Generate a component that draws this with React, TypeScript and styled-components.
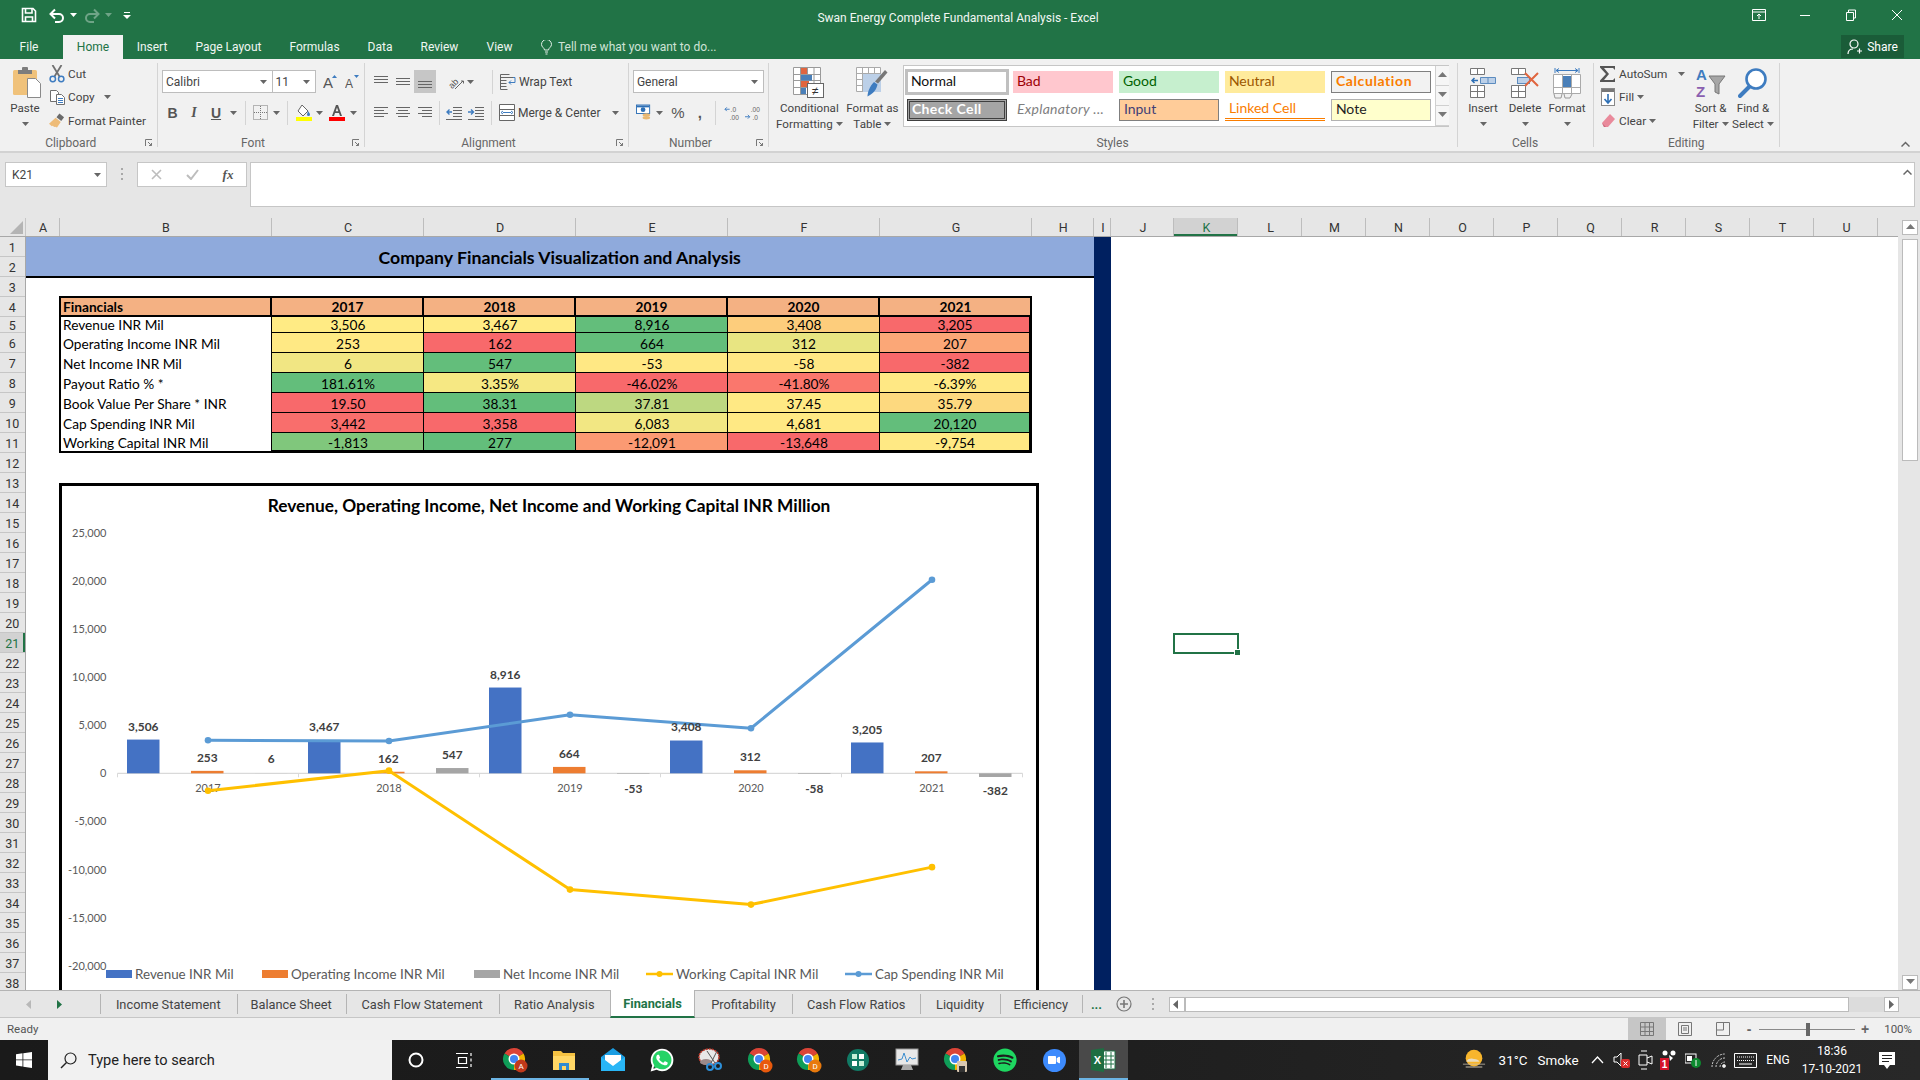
import React from "react";
import styled, { createGlobalStyle } from "styled-components";
import { FaWhatsapp, FaSpotify, FaVideo } from "react-icons/fa";

const UI = `Roboto, "Open Sans", sans-serif`;
const CELL = `Lato, "Open Sans", sans-serif`;

const Global = createGlobalStyle`
  html, body { margin: 0; padding: 0; background: #fff; }
  body { font-family: ${UI}; overflow: hidden; }
  * { box-sizing: border-box; }
  svg { display: block; }
`;

const Page = styled.div`
  width: 1920px; height: 1080px; display: flex; flex-direction: column; overflow: hidden; background: #e6e6e6;
`;

/* ---------- title bar ---------- */
const TitleBar = styled.header`
  height: 59px; flex: none; background: #217346; color: #fff; display: flex; flex-direction: column;
`;
const TitleRow = styled.div`
  height: 35px; display: grid; grid-template-columns: 1fr auto 1fr; align-items: start;
`;
const Qat = styled.div` display: flex; align-items: center; height: 30px; padding-left: 18px; `;
const Slot = styled.span<{ $w: number; $ml?: number; $dim?: boolean }>`
  display: inline-flex; align-items: center; justify-content: center; flex: none;
  width: ${p => p.$w}px; margin-left: ${p => p.$ml ?? 0}px; opacity: ${p => (p.$dim ? 0.35 : 1)};
`;
const DocTitle = styled.div`
  font-size: 12px; line-height: 36px; padding-right: 4px; white-space: nowrap; color: #f2f7f4;
`;
const WinControls = styled.div` display: flex; justify-content: flex-end; height: 30px; align-items: center; `;
const MenuRow = styled.div` height: 24px; display: flex; align-items: stretch; `;
const MenuTab = styled.div<{ $w: number; $ml?: number; $active?: boolean }>`
  width: ${p => p.$w}px; margin-left: ${p => p.$ml ?? 0}px; flex: none; display: flex; align-items: center; justify-content: center;
  font-size: 12px; background: ${p => (p.$active ? "#f1f1f1" : "transparent")};
  color: ${p => (p.$active ? "#217346" : "#f0f6f2")};
`;
const TellMe = styled.div`
  display: flex; align-items: center; gap: 6px; padding-left: 14px; font-size: 12px; color: #cfe3d7;
`;
const Share = styled.div`
  margin-left: auto; margin-right: 16px; width: 63px; height: 23px; background: #1a5c38; display: flex;
  align-items: center; justify-content: center; gap: 4px; font-size: 12px; color: #fff;
`;

/* ---------- ribbon ---------- */
const Ribbon = styled.section`
  height: 94px; flex: none; background: #f1f1f1; border-bottom: 2px solid #d2d2d2; display: flex; color: #444;
  font-size: 12px;
`;
const Group = styled.div<{ $w: number; $pl?: number }>`
  width: ${p => p.$w}px; flex: none; height: 84px; margin-top: 4px; border-right: 1px solid #d4d4d4;
  padding-left: ${p => p.$pl ?? 0}px; display: flex; flex-direction: column;
`;
const GroupBody = styled.div` height: 72px; flex: none; display: flex; `;
const GroupLabel = styled.div<{ $launch?: boolean }>`
  height: 16px; line-height: 16px; text-align: center; font-size: 12px; color: #666; flex: none; position: relative;
  padding-right: ${p => (p.$launch ? 15 : 0)}px;
`;
const GroupFoot = styled.div<{ $ml: number }>`
  margin-left: ${p => -p.$ml}px;
`;
const Launcher = styled.span`
  position: absolute; right: 5px; top: 4px;
`;
const BigCol = styled.div<{ $w: number; $ml?: number }>`
  width: ${p => p.$w}px; margin-left: ${p => p.$ml ?? 0}px; flex: none; padding-top: 4px; display: flex;
  flex-direction: column; align-items: center;
`;
const BigIcon = styled.div` height: 33px; display: flex; align-items: flex-start; justify-content: center; `;
const BigLine = styled.div`
  height: 16px; line-height: 16px; white-space: nowrap; display: flex; align-items: center; gap: 3px; font-size: 11.6px;
`;
const Stack = styled.div<{ $w: number; $ml?: number }>`
  width: ${p => p.$w}px; margin-left: ${p => p.$ml ?? 0}px; margin-top: -1px; flex: none; display: flex; flex-direction: column;
  font-size: 11.8px;
`;
const StackRow = styled.div` height: 23.5px; display: flex; align-items: center; gap: 3px; white-space: nowrap; `;
const IconBox = styled.span` width: 16px; flex: none; display: inline-flex; justify-content: center; `;
const Rows = styled.div` padding-top: 7px; display: flex; flex-direction: column; gap: 8px; `;
const Row = styled.div` height: 23px; display: flex; align-items: center; `;
const Select = styled.div<{ $w: number; $joined?: boolean }>`
  width: ${p => p.$w}px; height: 23px; flex: none; background: #fff; border: 1px solid #bdbdbd;
  border-left-width: ${p => (p.$joined ? 0 : 1)}px;
  display: flex; align-items: center; justify-content: space-between; padding: 0 5px 0 3px; font-size: 12px; color: #444;
`;
const Sep = styled.span<{ $ml: number }>`
  width: 1px; height: 24px; background: #d4d4d4; margin-left: ${p => p.$ml}px; flex: none;
`;
const Glyph = styled.span<{ $b?: boolean; $i?: boolean; $u?: boolean; $size?: number }>`
  font-size: ${p => p.$size ?? 14}px; color: #555; line-height: 1;
  font-family: ${p => (p.$i ? `"Liberation Serif", serif` : `"Liberation Sans", sans-serif`)};
  font-weight: ${p => (p.$b ? 700 : 400)}; font-style: ${p => (p.$i ? "italic" : "normal")};
  text-decoration: ${p => (p.$u ? "underline" : "none")};
`;
const ActiveSlot = styled(Slot)` height: 23px; background: #c6c6c6; `;
const TextAfterIcon = styled.span<{ $ml?: number }>` margin-left: ${p => p.$ml ?? 3}px; white-space: nowrap; font-size: 12px; `;
const Gallery = styled.div`
  width: 546px; height: 62px; margin-left: -1px; margin-top: 2px; background: #fff; border: 1px solid #c6c6c6; display: flex; flex: none;
`;
const GalleryGrid = styled.div`
  display: grid; grid-template-columns: repeat(5, 100px); grid-auto-rows: 22px; gap: 6px; padding: 5px 0 0 3px; width: 531.5px;
`;
const STYLE: Record<string, string> = {
  normal: "background:#fff; color:#111; outline:3px solid #c0c0c0; outline-offset:-1px;",
  bad: "background:#ffc7ce; color:#9c0006;",
  good: "background:#c6efce; color:#006100;",
  neutral: "background:#ffeb9c; color:#9c5700;",
  calc: "background:#f2f2f2; color:#fa7d00; font-weight:700; letter-spacing:.6px; border:1px solid #7f7f7f;",
  check: "background:#a5a5a5; color:#fff; font-weight:700; letter-spacing:.4px; border:1px solid #3f3f3f; outline:1px solid #3f3f3f; outline-offset:-3px;",
  expl: "background:#fff; color:#7f7f7f; font-style:italic; letter-spacing:.3px;",
  input: "background:#ffcc99; color:#3f3f76; border:1px solid #7f7f7f;",
  linked: "background:#fff; color:#fa7d00; border-bottom:3px double #fa7d00;",
  note: "background:#ffffcc; color:#222; border:1px solid #b2b2b2;",
};
const StyleCell = styled.div<{ $v: string }>`
  font-family: ${CELL}; font-size: 14px; display: flex; align-items: center; padding: 0 0 3px 4px; white-space: nowrap; overflow: hidden;
  ${p => STYLE[p.$v]}
`;
const Spinner = styled.div` width: 14px; margin-left: 4px; display: flex; flex-direction: column; border-left: 1px solid #d0d0d0; flex: none; `;
const SpinBtn = styled.div`
  height: 20px; display: flex; align-items: center; justify-content: center; border-bottom: 1px solid #d0d0d0; background: #f6f6f6;
`;
const RibbonEnd = styled.div` flex: 1; display: flex; align-items: flex-end; justify-content: flex-end; padding: 0 10px 4px 0; `;

/* ---------- formula bar ---------- */
const FormulaBar = styled.div` height: 65px; flex: none; padding: 9px 5px 0 5px; display: flex; align-items: flex-start; background: #e6e6e6; `;
const NameBox = styled.div`
  width: 102px; height: 25px; background: #fff; border: 1px solid #c6c6c6; display: flex; align-items: center;
  justify-content: space-between; padding: 0 5px 0 6px; font-size: 12px; color: #444; flex: none;
`;
const Dots = styled.div` width: 30px; flex: none; height: 25px; display: flex; align-items: center; justify-content: center; `;
const FxBox = styled.div`
  width: 110px; height: 25px; background: #fff; border: 1px solid #c6c6c6; display: flex; align-items: center; padding: 0; flex: none;
`;
const FxText = styled.span`
  font-family: "Liberation Serif", serif; font-style: italic; font-weight: 700; font-size: 13px; color: #555;
`;
const FormulaInput = styled.div`
  flex: 1; height: 45px; margin-left: 3px; background: #fff; border: 1px solid #c6c6c6; display: flex; justify-content: flex-end; padding: 6px 2px 0 0;
`;

/* ---------- grid ---------- */
const Workbook = styled.div` height: 772px; flex: none; display: flex; `;
const GridArea = styled.div` width: 1898px; flex: none; display: flex; flex-direction: column; `;
const ColHeaders = styled.div` height: 19px; flex: none; display: flex; border-bottom: 1px solid #a8a8a8; background: #e6e6e6; `;
const Corner = styled.div` width: 25.5px; flex: none; display: flex; align-items: flex-end; justify-content: flex-end; padding: 0 2px 2px 0; border-right: 1px solid #c6c6c6; `;
const ColHead = styled.div<{ $w: number; $active?: boolean }>`
  width: ${p => p.$w}px; flex: none; display: flex; align-items: center; justify-content: center; font-size: 12.5px; padding-left: 2px;
  border-right: 1px solid #bdbdbd; color: ${p => (p.$active ? "#217346" : "#333")};
  background: ${p => (p.$active ? "#d2d2d2" : "transparent")};
  box-shadow: ${p => (p.$active ? "inset 0 -2px 0 #217346" : "none")};
`;
const GridBody = styled.div` flex: 1; display: flex; min-height: 0; overflow: hidden; `;
const RowHeaders = styled.div` width: 25.5px; flex: none; display: flex; flex-direction: column; border-right: 1px solid #a8a8a8; `;
const RowHead = styled.div<{ $h: number; $active?: boolean }>`
  height: ${p => p.$h}px; flex: none; display: flex; align-items: center; justify-content: center; font-size: 12.5px; padding-top: 2px;
  border-bottom: 1px solid #c6c6c6; color: ${p => (p.$active ? "#217346" : "#333")};
  background: ${p => (p.$active ? "#d2d2d2" : "transparent")};
  box-shadow: ${p => (p.$active ? "inset -2px 0 0 #217346" : "none")};
`;
const Sheet = styled.div` flex: 1; position: relative; background: #fff; display: flex; overflow: hidden; `;
const Dashboard = styled.div` width: 1068.5px; flex: none; display: flex; flex-direction: column; `;
const Divider = styled.div` width: 17px; flex: none; background: #002060; `;
const Banner = styled.div`
  height: 41px; flex: none; background: #8faadc; border-bottom: 2px solid #000; display: flex; align-items: center;
  justify-content: center; font: 700 17.7px ${CELL}; color: #000; padding-top: 2px;
`;
const FinTable = styled.div`
  margin: 18px 0 0 33.5px; width: 973px; flex: none; border: 2px solid #000; display: grid;
  grid-template-columns: 211px 152px 152px 152px 152px 150px;
  grid-template-rows: 19px 16.3px repeat(5, 20px) 18.2px;
  font: 13.7px ${CELL}; color: #000;
`;
const HeadCell = styled.div<{ $left?: boolean }>`
  background: #f4b183; border-bottom: 2px solid #000; border-right: 2px solid #000; display: flex; align-items: center;
  justify-content: ${p => (p.$left ? "flex-start" : "center")}; padding-left: ${p => (p.$left ? 2 : 1)}px; font-weight: 700;
  &:nth-child(6) { border-right: 0; }
`;
const RowLabel = styled.div<{ $tight?: boolean }>`
  background: #fff; border-right: 1px solid #000; display: flex; align-items: center; white-space: nowrap;
  padding: ${p => (p.$tight ? "0 0 2px 2px" : "1px 0 0 2px")};
`;
const ValueCell = styled.div<{ $bg: string; $tight?: boolean }>`
  background: ${p => p.$bg}; display: flex; align-items: center; justify-content: center;
  padding: ${p => (p.$tight ? "0 0 1px 1px" : "1px 0 0 1px")};
  border-right: 1px solid #000; border-bottom: 1px solid #000;
`;
const ChartBox = styled.div`
  margin: 30px 0 0 33.5px; width: 980px; height: 520px; flex: none; border: 3px solid #000; background: #fff; display: flex; flex-direction: column;
`;
const ChartTitle = styled.div`
  height: 38.6px; flex: none; display: flex; align-items: center; justify-content: center; font: 700 17.3px ${CELL}; color: #000;
`;
const Plot = styled.svg` flex: none; overflow: visible; `;
const AxisText = styled.text` font: 11px ${CELL}; fill: #595959; `;
const DataText = styled.text` font: 700 11.9px ${CELL}; fill: #404040; `;
const Legend = styled.div` height: 24px; flex: none; display: flex; align-items: center; padding-left: 44px; `;
const LegendItem = styled.div<{ $w: number }>`
  width: ${p => p.$w}px; flex: none; display: flex; align-items: center; gap: 3px; font: 13.4px ${CELL}; color: #595959; white-space: nowrap;
`;
const Swatch = styled.span<{ $c: string }>` width: 26px; height: 8px; background: ${p => p.$c}; flex: none; `;
const Selection = styled.div`
  position: absolute; left: 1147.5px; top: 396px; width: 66px; height: 21px; border: 2px solid #217346;
  &::after { content: ""; position: absolute; right: -4px; bottom: -4px; width: 5px; height: 5px; background: #217346; border: 1px solid #fff; }
`;
const VScroll = styled.div` flex: 1; display: flex; flex-direction: column; padding: 2px 2px 0 4px; background: #e6e6e6; `;
const ScrollBtn = styled.div<{ $w?: number; $ml?: number }>`
  height: 15px; width: ${p => (p.$w ? p.$w + "px" : "auto")}; margin-left: ${p => p.$ml ?? 0}px; flex: none; background: #fff; border: 1px solid #bbb; display: flex; align-items: center; justify-content: center;
`;
const VThumb = styled.div` height: 222px; margin-top: 4px; background: #fff; border: 1px solid #bbb; flex: none; `;
const Grow = styled.div` flex: 1; `;

/* ---------- sheet tabs ---------- */
const TabBar = styled.div`
  height: 28px; flex: none; display: flex; align-items: stretch; background: #e6e6e6; border-top: 1px solid #b4b4b4; border-bottom: 1px solid #c6c6c6; font-size: 12.8px; color: #444;
`;
const TabNav = styled.div` width: 100px; flex: none; display: flex; align-items: center; padding-left: 25px; gap: 21px; `;
const SheetTab = styled.div<{ $w: number; $active?: boolean; $noSep?: boolean }>`
  width: ${p => p.$w}px; flex: none; display: flex; align-items: center; margin-bottom: ${p => (p.$active ? -1 : 0)}px;
  margin-top: ${p => (p.$active ? -1 : 0)}px; white-space: nowrap;
  justify-content: ${p => (p.$active || p.$noSep ? "center" : "space-between")};
  ${p => p.$active
    ? `background:#fff; color:#217346; font-weight:700; border-left:1px solid #b4b4b4; border-right:1px solid #b4b4b4; border-bottom:2px solid #217346;`
    : ""}
  &::before {
    content: ""; display: ${p => (p.$active || p.$noSep ? "none" : "block")}; width: 1px; height: 20px; background: #b4b4b4;
  }
  &::after { content: ""; display: ${p => (p.$active || p.$noSep ? "none" : "block")}; width: 1px; }
`;
const More = styled.div` width: 28px; flex: none; border-left: 1px solid #b4b4b4; margin: 4px 0; display: flex; align-items: center; justify-content: center; color: #217346; font-weight: 700; `;
const HScroll = styled.div` flex: 1; display: flex; align-items: center; padding: 0 21px 0 0; `;
const HThumb = styled.div` width: 664px; height: 15px; flex: none; background: #fff; border: 1px solid #bbb; `;
const HRest = styled.div` flex: 1; height: 15px; background: #dcdcdc; `;

/* ---------- status ---------- */
const StatusBar = styled.div`
  height: 22px; flex: none; background: #f0f0f0; display: flex; align-items: stretch; font-size: 11.5px; color: #555;
`;
const Ready = styled.div` display: flex; align-items: center; padding-left: 7px; `;
const ViewBtns = styled.div` margin-left: auto; display: flex; align-items: center; padding-right: 8px; `;
const ViewBtn = styled.div<{ $active?: boolean; $w: number }>`
  width: ${p => p.$w}px; height: 22px; display: flex; align-items: center; justify-content: center; background: ${p => (p.$active ? "#c6c6c6" : "transparent")};
`;
const ZoomTrack = styled.div`
  width: 96px; height: 1px; background: #8a8a8a; position: relative; margin: 0 3px; flex: none;
`;
const ZoomThumb = styled.span` position: absolute; left: 47px; top: -6px; width: 4px; height: 13px; background: #666; `;
const ZoomText = styled.div` width: 40px; text-align: right; `;
const Sign = styled.span` font: 700 14px "Liberation Sans", sans-serif; color: #666; width: 14px; text-align: center; `;

/* ---------- taskbar ---------- */
const Taskbar = styled.footer`
  height: 40px; flex: none; background: linear-gradient(90deg, #1a1a1a, #1d1d1d 50%, #282828); display: flex; align-items: stretch; color: #fff;
`;
const Start = styled.div` width: 48px; flex: none; display: flex; align-items: center; justify-content: center; `;
const Search = styled.div`
  width: 344px; flex: none; background: #f1f1f1; display: flex; align-items: center; gap: 11px; padding-left: 12px; font-size: 14.6px; color: #222;
`;
const Pinned = styled.div<{ $w: number; $ml?: number; $on?: boolean; $under?: boolean }>`
  width: ${p => p.$w}px; margin-left: ${p => p.$ml ?? 0}px; flex: none; display: flex; align-items: center; justify-content: center;
  background: ${p => (p.$on ? "#494949" : "transparent")};
  box-shadow: ${p => (p.$on || p.$under ? "inset 0 -2px 0 #6cb4e4" : "none")};
`;
const ZoomTile = styled.span`
  width: 23px; height: 23px; border-radius: 50%; background: #3d8bfd; display: flex; align-items: center; justify-content: center;
`;
const WaTile = styled.span`
  width: 21px; height: 21px; border-radius: 50%; background: #25d366; display: flex; align-items: center; justify-content: center;
  svg { flex: none; }
`;
const Tray = styled.div` margin-left: auto; margin-right: 12px; display: flex; align-items: center; `;
const TrayItem = styled.div<{ $w: number; $ml?: number; $fs?: number }>`
  width: ${p => p.$w}px; margin-left: ${p => p.$ml ?? 0}px; flex: none; display: flex; align-items: center; justify-content: center; white-space: nowrap;
  font-size: ${p => p.$fs ?? 13.4}px;
`;
const Clock = styled(TrayItem)` flex-direction: column; font-size: 12px; line-height: 18px; `;

/* ---------- icon drawings ---------- */
const Caret = ({ c = "#666" }: { c?: string }) => (
  <svg width="7" height="4" viewBox="0 0 7 4"><path d="M0 0h7L3.5 4z" fill={c} /></svg>
);
const Save = () => (
  <svg width="16" height="16" viewBox="0 0 16 16" fill="none" stroke="#fff" strokeWidth="1.6">
    <path d="M1.5 1.5h10.5l2.5 2.5v10.5h-13z" /><path d="M4.5 2v4h6.5V2M4.5 14.5V10h7v4.5" />
  </svg>
);
const Undo = ({ c = "#fff" }: { c?: string }) => (
  <svg width="16" height="15" viewBox="0 0 16 15" fill="none" stroke={c} strokeWidth="2">
    <path d="M2 6h8a4 4 0 010 8H6" /><path d="M6 1.5L1.5 6 6 10.5" />
  </svg>
);
const Redo = () => (
  <svg width="16" height="15" viewBox="0 0 16 15" fill="none" stroke="#fff" strokeWidth="2">
    <path d="M14 6H6a4 4 0 000 8h4" /><path d="M10 1.5L14.5 6 10 10.5" />
  </svg>
);
const QatMenu = () => (
  <svg width="8" height="8" viewBox="0 0 8 8"><path d="M1 1h6v1H1zM0 4h8L4 8z" fill="#fff" /></svg>
);
const Paste = () => (
  <svg width="32" height="31" viewBox="-4 0 32 31">
    <rect x="0" y="3" width="24" height="25" rx="1.500" fill="#f0c27b" />
    <rect x="5" y="3" width="14" height="4" fill="#7d7d7d" /><rect x="9" y="0" width="6" height="4" rx="1" fill="#7d7d7d" />
    <path d="M14.500 11.500h8l5 5v14h-13z" fill="#fff" stroke="#8a8a8a" />
  </svg>
);
const Cut = () => (
  <svg width="16" height="18" viewBox="0 0 16 18" fill="none">
    <path d="M3.500 0l7 11.500M12.500 0l-7 11.500" stroke="#707070" strokeWidth="1.800" />
    <circle cx="3.800" cy="14" r="2.700" stroke="#3e7cc0" strokeWidth="1.500" /><circle cx="12.200" cy="14" r="2.700" stroke="#3e7cc0" strokeWidth="1.500" />
  </svg>
);
const Copy = () => (
  <svg width="15" height="15" viewBox="0 0 15 15" fill="#fff" stroke="#707070">
    <path d="M.5.5h6l2 2v9h-8z" /><path d="M6.500 4.500h5l3 3v7h-8z" />
    <path d="M8 8.500h5M8 10.500h5M8 12.500h5" stroke="#3e7cc0" />
  </svg>
);
const Painter = () => (
  <svg width="17" height="16" viewBox="0 0 17 16">
    <path d="M11 0l5 4-3 4-5-4z" fill="#6a6a6a" /><path d="M7 4.500l5.500 4.500-4 6-2-1-1 .5-1.500-1.500-1 .5L0 11z" fill="#eebc79" />
  </svg>
);
const FillColor = () => (
  <svg width="16" height="17" viewBox="0 0 16 17">
    <path d="M6 1l6 6-5 5-5-5z" fill="#fff" stroke="#666" /><path d="M12 7c1 1.500 2 2.500 2 3.500a1.500 1.500 0 01-3 0z" fill="#3e7cc0" />
    <rect y="13" width="16" height="4" fill="#ffff00" />
  </svg>
);
const FontColor = () => (
  <svg width="16" height="17" viewBox="0 0 16 17">
    <path d="M3 12L7 1h2l4 11h-2l-1-3H6l-1 3zM6.700 7.300h2.600L8 3.500z" fill="#555" />
    <rect y="13" width="16" height="4" fill="#ff0000" />
  </svg>
);
const Borders = () => (
  <svg width="15" height="15" viewBox="0 0 15 15" stroke="#777" strokeDasharray="1 1" fill="none">
    <path d="M.5.5h14v14H.5zM7.500 1v13M1 7.500h13" />
  </svg>
);
const GrowA = ({ small }: { small?: boolean }) => (
  <svg width="14" height="15" viewBox="0 0 14 15">
    <text x="0" y="14" fontFamily="Liberation Sans" fontSize={small ? 12 : 15} fill="#555">A</text>
    <path d={small ? "M9 1h5l-2.500 3z" : "M9 4h5l-2.500-3z"} fill="#3e7cc0" />
  </svg>
);
const Lines = ({ rows }: { rows: number[][] }) => (
  <svg width="14" height="14" viewBox="0 0 14 14" stroke="#666">
    {rows.map((r, i) => <path key={i} d={`M${r[0]} ${r[1]}.500h${r[2]}`} />)}
  </svg>
);
const Orient = () => (
  <svg width="18" height="16" viewBox="0 0 18 16" fill="none">
    <text x="1" y="12" fontSize="9" fontFamily="Liberation Sans" fill="#555" stroke="none" transform="rotate(-45 7 9)">ab</text>
    <path d="M8 15l8-8M14 7h2.500v2.500" stroke="#666" />
  </svg>
);
const Indent = ({ rev }: { rev?: boolean }) => (
  <svg width="16" height="14" viewBox="0 0 16 14" stroke="#666" fill="none">
    <path d="M7 1.500h9M7 4.500h9M7 7.500h9M7 10.500h9M0 13.500h16" />
    <path d={rev ? "M6 6H1M3.500 3.500L1 6l2.500 2.500" : "M0 6h5M3 3.500L5.500 6 3 8.500"} stroke="#3e7cc0" strokeWidth="1.4" />
  </svg>
);
const Wrap = () => (
  <svg width="16" height="16" viewBox="0 0 16 16" fill="none" stroke="#666">
    <path d="M.5.5h9M.5 3.500h13M.5 6.500h6M.5 9.500h6M.5 12.500h6M.5.5v15h7" />
    <path d="M13 3.500h2v5h-6M11 6.500L9 8.500l2 2" stroke="#3e7cc0" />
  </svg>
);
const Merge = () => (
  <svg width="16" height="17" viewBox="0 0 16 17" fill="#fff" stroke="#666">
    <path d="M.5.5h15v16H.5zM.5 5.500h15M.5 11.500h15" /><path d="M4 8.500h8M4 7l-2 1.500L4 10M12 7l2 1.500L12 10" stroke="#3e7cc0" />
  </svg>
);
const Accounting = () => (
  <svg width="17" height="18" viewBox="0 0 17 18">
    <rect x=".5" y=".5" width="14" height="9" fill="#fff" stroke="#2d6fb5" /><rect x="1" y="1" width="13" height="2" fill="#2d6fb5" />
    <circle cx="7.500" cy="5.500" r="2.500" fill="#2d6fb5" /><ellipse cx="11" cy="11" rx="4" ry="1.800" fill="#e9b872" /><ellipse cx="11" cy="14" rx="4" ry="1.800" fill="#e9b872" />
  </svg>
);
const Decimal = ({ more }: { more?: boolean }) => (
  <svg width="17" height="16" viewBox="0 0 17 16">
    <text x={more ? 6 : 7} y="7" fontSize="7" fontFamily="Liberation Sans" fill="#666">{more ? ".00" : ".0"}</text>
    <text x={more ? 8 : 6} y="15" fontSize="7" fontFamily="Liberation Sans" fill="#666">{more ? ".0" : ".00"}</text>
    <path d={more ? "M0 12h5M3 10l2 2-2 2" : "M1 4h5M3 2L1 4l2 2"} stroke="#3e7cc0" fill="none" />
  </svg>
);
const CondFmt = () => (
  <svg width="32" height="31" viewBox="0 0 32 31">
    <g fill="#fff" stroke="#9a9a9a"><path d="M.5.5h27v27H.5zM7.500 1v26M14.500 1v26M21 1v26M1 7.500h26M1 13.500h26M1 20.500h26" /></g>
    <rect x="8" y="1" width="6" height="6" fill="#e0653f" /><rect x="8" y="8" width="11" height="5.500" fill="#4a7fb8" /><rect x="8" y="14" width="8" height="6" fill="#e0653f" /><rect x="8" y="21" width="5" height="6" fill="#4a7fb8" />
    <rect x="14.500" y="16.500" width="16" height="14" fill="#fff" stroke="#666" />
    <text x="19" y="28" fontSize="12" fontFamily="Liberation Sans" fill="#333">≠</text>
  </svg>
);
const FmtTable = () => (
  <svg width="32" height="31" viewBox="0 0 32 31">
    <g fill="#fff" stroke="#aaa"><path d="M.5.5h24v24H.5zM6.500 1v24M12.500 1v24M18.500 1v24M1 6.500h24M1 12.500h24M1 18.500h24" /></g>
    <rect x="7" y="7" width="18" height="18" fill="#bcd0e8" />
    <path d="M29 3l2.500 2.500-9.500 11-3-2z" fill="#777" /><path d="M18 15l3.500 2.500c-1 5-4 9-10 12 0-4 2-10 6.500-14.500z" fill="#3e7cc0" />
  </svg>
);
const CellGrid = ({ x, y, n = 2 }: { x: number; y: number; n?: number }) => (
  <path d={`M${x}.500 ${y}.500h14v${n === 2 ? 12 : 6}h-14zM${x + 7}.500 ${y}v${n === 2 ? 12 : 6}${n === 2 ? `M${x} ${y + 6}.500h14` : ""}`} fill="#fff" stroke="#777" />
);
const InsertCells = () => (
  <svg width="28" height="31" viewBox="0 0 28 31">
    <CellGrid x={1} y={1} n={1} /><CellGrid x={1} y={18} />
    <path d="M11.500 10.500h15v6h-15zM19 11v5" fill="#bcd0e8" stroke="#5c8cbf" />
    <path d="M9 13.500H3M5.500 11L3 13.500 5.500 16" stroke="#2d6fb5" strokeWidth="1.500" fill="none" />
  </svg>
);
const DeleteCells = () => (
  <svg width="30" height="31" viewBox="0 0 30 31">
    <CellGrid x={1} y={1} n={1} /><CellGrid x={1} y={18} />
    <rect x="7.500" y="10.500" width="12" height="6" fill="#bcd0e8" stroke="#5c8cbf" />
    <path d="M15 6l13 13M28 6L15 19" stroke="#e0653f" strokeWidth="2" />
  </svg>
);
const FormatCells = () => (
  <svg width="28" height="33" viewBox="0 0 28 33">
    <path d="M2 1v5M26 1v5M3 3.500h22M3 3.500l3-2M3 3.500l3 2M25 3.500l-3-2M25 3.500l-3 2" stroke="#3e7cc0" fill="none" />
    <g fill="#fff" stroke="#aaa"><path d="M.5 7.500h27v19H.5zM9.500 8v18M18.500 8v18M1 20.500h26" /></g>
    <rect x="10" y="9" width="8" height="11" fill="#4a7fb8" />
    <path d="M1 27l1 4h6l1-4M11 27l1 4h5l2-4" fill="none" stroke="#999" />
  </svg>
);
const Sigma = () => (
  <svg width="16" height="16" viewBox="0 0 16 16"><path d="M0 0h15v4l-2-2H4l5 6-5 6h9l2-2v4H0v-1.500L6 8 0 1.500z" fill="#555" /></svg>
);
const FillDown = () => (
  <svg width="14" height="18" viewBox="0 0 14 18">
    <rect x=".5" y=".5" width="13" height="17" fill="#fff" stroke="#888" /><rect x="1" y="1" width="12" height="3" fill="#777" />
    <path d="M7 6v9M3.500 11L7 15l3.500-4" stroke="#2d6fb5" strokeWidth="1.600" fill="none" />
  </svg>
);
const Eraser = () => (
  <svg width="15" height="15" viewBox="0 0 15 15"><path d="M9 1l5 5-7 8H3L1 10z" fill="#e98a9b" /><path d="M1 10l4 4H3z" fill="#c9697c" /></svg>
);
const SortFilter = () => (
  <svg width="30" height="34" viewBox="0 0 30 34">
    <text x="0" y="13" fontSize="15" fontWeight="700" fontFamily="Liberation Sans" fill="#3e7cc0">A</text>
    <text x="0" y="30" fontSize="15" fontWeight="700" fontFamily="Liberation Sans" fill="#8a5fb0">Z</text>
    <path d="M13 9h16l-6 8v10l-4-2v-8z" fill="#a6a6a6" stroke="#777" />
  </svg>
);
const Find = () => (
  <svg width="30" height="33" viewBox="0 0 30 33" fill="none">
    <circle cx="18" cy="12" r="9.500" stroke="#3e7cc0" strokeWidth="2.600" fill="#fff" /><path d="M11 20L2 29" stroke="#3e7cc0" strokeWidth="4" strokeLinecap="round" />
  </svg>
);
const LaunchIcon = () => (
  <svg width="7" height="7" viewBox="0 0 7 7" fill="none" stroke="#777"><path d="M.5 7V.5H7" /><path d="M3 3l3.500 3.500M4 6.500h2.500V4" /></svg>
);
const Chevron = ({ up = true }: { up?: boolean }) => (
  <svg width="9" height="6" viewBox="0 0 9 6" fill="none" stroke="#666" strokeWidth="1.500"><path d={up ? "M.5 5.500l4-4 4 4" : "M.5.5l4 4 4-4"} /></svg>
);
const Tri = ({ dir, c = "#777" }: { dir: "u" | "d" | "l" | "r"; c?: string }) => {
  const d = { u: "M0 6h9L4.500 1z", d: "M0 1h9L4.500 6z", l: "M6 0v9L1 4.500z", r: "M2 0v9l5-4.500z" }[dir];
  return <svg width="9" height="9" viewBox="0 0 9 9"><path d={d} fill={c} /></svg>;
};
const Bulb = () => (
  <svg width="11" height="15" viewBox="0 0 11 15" fill="none" stroke="#e4efe8"><path d="M3.500 10c0-2-3-3-3-5.500a5 5 0 0110 0c0 2.500-3 3.500-3 5.500zM4 12h3M4.500 14h2" /></svg>
);
const Person = () => (
  <svg width="16" height="16" viewBox="0 0 16 16" fill="none" stroke="#fff" strokeWidth="1.200"><circle cx="7" cy="5" r="4" /><path d="M1 15c0-3 2-5 5-5M10 12h5M12.500 9.500v5" /></svg>
);
const WinBtn = ({ d }: { d: string }) => (
  <svg width="12" height="12" viewBox="0 0 12 12" fill="none" stroke="#fff"><path d={d} /></svg>
);
const RibbonDisp = () => (
  <svg width="14" height="12" viewBox="0 0 14 12" fill="none" stroke="#fff"><path d="M.5.5h13v11H.5zM.5 3h13M7 10V5M5 7l2-2 2 2" /></svg>
);
const Check = () => (
  <svg width="13" height="11" viewBox="0 0 13 11" fill="none" stroke="#bdbdbd" strokeWidth="2"><path d="M1 6l4 4 7-9" /></svg>
);
const XMark = () => (
  <svg width="11" height="11" viewBox="0 0 11 11" stroke="#bdbdbd" strokeWidth="1.600"><path d="M1 1l9 9M10 1l-9 9" /></svg>
);
const VDots = () => (
  <svg width="3" height="13" viewBox="0 0 3 13" fill="#a8a8a8"><rect width="2" height="2" /><rect y="5" width="2" height="2" /><rect y="10" width="2" height="2" /></svg>
);
const CornerTri = () => (
  <svg width="13" height="13" viewBox="0 0 13 13"><path d="M13 0v13H0z" fill="#b4b4b4" /></svg>
);
const PlusCircle = () => (
  <svg width="16" height="16" viewBox="0 0 16 16" fill="none" stroke="#777" strokeWidth="1.200"><circle cx="8" cy="8" r="7" /><path d="M8 4v8M4 8h8" strokeWidth="1.600" /></svg>
);
const ViewNormal = () => (
  <svg width="14" height="14" viewBox="0 0 14 14" fill="none" stroke="#777"><path d="M.5.500h13v13H.5zM5 1v12M9.500 1v12M1 5h12M1 9.500h12" /></svg>
);
const ViewPage = () => (
  <svg width="14" height="14" viewBox="0 0 14 14" fill="none" stroke="#777"><path d="M.5.500h13v13H.5zM3.500 3.500h7v8h-7zM5 6h4M5 8h4" /></svg>
);
const ViewBreak = () => (
  <svg width="14" height="14" viewBox="0 0 14 14" fill="none" stroke="#777"><path d="M.5.500h13v13H.5zM7.500 1v7H1" /></svg>
);

/* taskbar drawings */
const Windows = () => (
  <svg width="16" height="16" viewBox="0 0 16 16" fill="#fff"><path d="M0 2.300l6.500-1v6.200H0zM7.300 1.200L16 0v7.500H7.300zM0 8.300h6.500v6.200l-6.500-1zM7.300 8.300H16V16l-8.700-1.200z" /></svg>
);
const Magnifier = () => (
  <svg width="17" height="17" viewBox="0 0 17 17" fill="none" stroke="#222" strokeWidth="1.200"><circle cx="10.500" cy="6.500" r="5.500" /><path d="M6.500 10.500L1 16" strokeWidth="1.500" /></svg>
);
const Cortana = () => (
  <svg width="16" height="16" viewBox="0 0 16 16" fill="none" stroke="#fff" strokeWidth="2"><circle cx="8" cy="8" r="6.500" /></svg>
);
const TaskView = () => (
  <svg width="17" height="17" viewBox="0 0 17 17" fill="none" stroke="#fff"><path d="M0 1.500h12M0 15.500h12M2.500 5.500h8v6h-8zM15 1v3M15 6.500v3M15 12v3" strokeWidth="1.200" /></svg>
);
const Chrome = ({ badge, bc, face }: { badge?: string; bc?: string; face?: boolean }) => (
  <svg width="26" height="26" viewBox="0 0 26 26">
    <path d="M12 12L2.470 6.500A11 11 0 0121.530 6.500z" fill="#db4437" />
    <path d="M12 12L21.530 6.500A11 11 0 0112 23z" fill="#f4b400" />
    <path d="M12 12L12 23A11 11 0 012.470 6.500z" fill="#0f9d58" />
    <circle cx="12" cy="12" r="5.500" fill="#fff" /><circle cx="12" cy="12" r="4" fill="#4285f4" />
    {badge && <circle cx="19" cy="19" r="6.500" fill={bc} />}
    {badge && <text x="19" y="22" textAnchor="middle" fontSize="8" fontFamily="Roboto" fill="#fff">{badge}</text>}
    {face && <g><rect x="14" y="14" width="10" height="11" rx="1" fill="#d9c7b0" /><rect x="16" y="19" width="6" height="6" fill="#333" /></g>}
  </svg>
);
const Folder = () => (
  <svg width="24" height="22" viewBox="0 0 24 22">
    <path d="M1 2h8l2 2h12v17H1z" fill="#f5c242" /><path d="M1 7h22v14H1z" fill="#ffd765" />
    <rect x="7" y="14" width="10" height="7" fill="#2f8bd0" /><rect x="10" y="17" width="4" height="4" fill="#ffd765" />
  </svg>
);
const Mail = () => (
  <svg width="26" height="26" viewBox="0 0 26 26">
    <path d="M13 1l12 9v14H1V10z" fill="#1b9de2" /><path d="M5 8h16v9l-8 5-8-5z" fill="#fff" /><path d="M1 10l12 9 12-9v14H1z" fill="#29b6f6" />
  </svg>
);
const Snip = () => (
  <svg width="26" height="26" viewBox="0 0 26 26" fill="none">
    <ellipse cx="11" cy="10" rx="10" ry="8" fill="#e8e8e8" stroke="#c0392b" strokeWidth="1.500" strokeDasharray="2 1" /><ellipse cx="8" cy="15" rx="6" ry="3" fill="#9b8a8a" />
    <path d="M9 4l8 12M19 4l-6 12" stroke="#555" /><circle cx="12" cy="20" r="3" stroke="#2d8fd8" strokeWidth="2" /><circle cx="20" cy="19" r="3" stroke="#2d8fd8" strokeWidth="2" />
  </svg>
);
const Calc = () => (
  <svg width="24" height="24" viewBox="0 0 24 24">
    <circle cx="12" cy="12" r="11" fill="#117a65" /><rect x="6" y="6" width="5" height="5" fill="#c6f0d8" /><rect x="13" y="6" width="5" height="5" fill="#fff" /><rect x="6" y="13" width="5" height="5" fill="#fff" /><rect x="13" y="13" width="5" height="5" fill="#c6f0d8" />
  </svg>
);
const Perf = () => (
  <svg width="26" height="26" viewBox="0 0 26 26">
    <rect x="2" y="2" width="22" height="16" fill="#e8e8e8" stroke="#999" /><path d="M4 13l4-1 2-6 3 9 3-5 2 2 4-1" stroke="#3e8fd0" fill="none" /><path d="M9 18h8l2 5H7z" fill="#aaa" />
  </svg>
);
const Excel = () => (
  <svg width="26" height="24" viewBox="0 0 26 24">
    <path d="M9 3h16v18H9z" fill="#fff" stroke="#217346" /><path d="M16 4v16M21 4v16M10 8h14M10 12h14M10 16h14" stroke="#217346" />
    <path d="M1 2l13-2v24L1 22z" fill="#1e6e42" />
    <text x="7.500" y="16" textAnchor="middle" fontSize="11" fontWeight="700" fontFamily="Liberation Sans" fill="#fff">X</text>
  </svg>
);
const Weather = () => (
  <svg width="26" height="26" viewBox="0 0 26 26">
    <circle cx="13" cy="11" r="9" fill="#f7b52c" /><path d="M5 14c2-3 6-3 8-2 3 0 5 1 6 3H5z" fill="#e9dcc0" /><path d="M1 17h24v1H1zM4 20h18v1H4z" fill="#c9c0ad" />
  </svg>
);
const Speaker = () => (
  <svg width="18" height="18" viewBox="0 0 18 18"><path d="M1 6h3l4-4v13L4 11H1z" fill="none" stroke="#fff" /><rect x="8" y="8" width="9" height="9" rx="2" fill="#d92b2b" /><path d="M10.500 10.500l4 4M14.500 10.500l-4 4" stroke="#fff" /></svg>
);
const MeetCam = () => (
  <svg width="15" height="20" viewBox="0 0 15 20" fill="none" stroke="#fff"><path d="M3 1h6M3 19h6M1 5h8v10H1zM9 8l5-2v8l-5-2" /></svg>
);
const RedBadge = () => (
  <svg width="18" height="20" viewBox="0 0 18 20">
    <circle cx="5" cy="3" r="2.500" fill="#fff" /><circle cx="13" cy="3" r="2.500" fill="#fff" /><path d="M9 5l4 3-3 3z" fill="#fff" />
    <rect x="0" y="8" width="9" height="12" fill="#d4142a" /><text x="4.500" y="18" textAnchor="middle" fontSize="10" fontWeight="700" fontFamily="Liberation Sans" fill="#fff">1</text>
  </svg>
);
const Security = () => (
  <svg width="16" height="16" viewBox="0 0 16 16"><rect x="0" y="2" width="11" height="9" fill="none" stroke="#fff" /><rect x="2" y="4" width="5" height="5" fill="#fff" /><circle cx="11" cy="11" r="5" fill="#0d8a2f" /><path d="M11 8v6" stroke="#fff" /></svg>
);
const Wifi = () => (
  <svg width="15" height="15" viewBox="0 0 15 15" fill="none" stroke="#cfcfcf"><path d="M1 14A13 13 0 0114 1M5 14a9 9 0 019-9M9 14a5 5 0 015-5" strokeDasharray="2 1" /><circle cx="13" cy="13" r="1.500" fill="#fff" /></svg>
);
const Keyboard = () => (
  <svg width="23" height="15" viewBox="0 0 23 15" fill="none" stroke="#fff"><path d="M.5.500h22v14H.5zM5 11h13" /><path d="M3 4h17M3 7.500h17" strokeDasharray="1 1" /></svg>
);
const Notify = () => (
  <svg width="16" height="17" viewBox="0 0 16 17"><path d="M0 0h16v13h-5l-3 4-3-4H0z" fill="#fff" /><path d="M3 3.500h10M3 6.500h10M3 9.500h7" stroke="#222" /></svg>
);

/* ---------- data ---------- */
const COLS: [string, number][] = [
  ["A", 34], ["B", 212], ["C", 152], ["D", 152], ["E", 152], ["F", 152], ["G", 152], ["H", 62.5], ["I", 17], ["J", 63],
  ["K", 64], ["L", 64], ["M", 64], ["N", 64], ["O", 64], ["P", 64], ["Q", 64], ["R", 64], ["S", 64], ["T", 64], ["U", 64],
];
const ROW_H = [20, 20, 19.7, 20, 16.6, 20, 20, 20, 20, 20, 19.4, 20.3];
const ROWS = Array.from({ length: 38 }, (_, i) => ({ n: i + 1, h: ROW_H[i] ?? 20 }));
const YEARS = [2017, 2018, 2019, 2020, 2021];
const TABLE: { label: string; cells: [string, string][] }[] = [
  { label: "Revenue INR Mil", cells: [["3,506", "#ffeb84"], ["3,467", "#ffeb84"], ["8,916", "#63be7b"], ["3,408", "#fdcd7c"], ["3,205", "#f8696b"]] },
  { label: "Operating Income INR Mil", cells: [["253", "#ffe984"], ["162", "#f8696b"], ["664", "#63be7b"], ["312", "#e8e582"], ["207", "#fba777"]] },
  { label: "Net Income INR Mil", cells: [["6", "#f1e683"], ["547", "#63be7b"], ["-53", "#ffe884"], ["-58", "#ffe784"], ["-382", "#f8696b"]] },
  { label: "Payout Ratio % *", cells: [["181.61%", "#63be7b"], ["3.35%", "#f6e883"], ["-46.02%", "#f8696b"], ["-41.80%", "#fa776d"], ["-6.39%", "#ffe884"]] },
  { label: "Book Value Per Share * INR", cells: [["19.50", "#f8696b"], ["38.31", "#63be7b"], ["37.81", "#bdd881"], ["37.45", "#ffe984"], ["35.79", "#fdd97f"]] },
  { label: "Cap Spending INR Mil", cells: [["3,442", "#f96e6c"], ["3,358", "#f8696b"], ["6,083", "#f2e783"], ["4,681", "#ffe984"], ["20,120", "#63be7b"]] },
  { label: "Working Capital INR Mil", cells: [["-1,813", "#80c77c"], ["277", "#63be7b"], ["-12,091", "#fb9a73"], ["-13,648", "#f8696b"], ["-9,754", "#ffe984"]] },
];
const REV = [3506, 3467, 8916, 3408, 3205];
const OP = [253, 162, 664, 312, 207];
const NET = [6, 547, -53, -58, -382];
const WC = [-1813, 277, -12091, -13648, -9754];
const CAP = [3442, 3358, 6083, 4681, 20120];
const y0 = 773.3;
const sy = (v: number) => y0 - (v * 48.1) / 5000;
const catX = (i: number) => 117.5 + i * 181;
const REV_Y = [727, 727, 675, 727, 730];
const OP_Y = [758, 759, 754, 757, 758];
const NET_Y = [759, 755, 788.6, 788.6, 791];
const pts = (arr: number[]) => arr.map((v, i) => `${catX(i) + 90.5},${sy(v)}`).join(" ");

const Chart = () => (
  <Plot width="974" height="437" viewBox="62 525 974 437">
    {[25000, 20000, 15000, 10000, 5000, 0, -5000, -10000, -15000, -20000].map(v => (
      <AxisText key={v} x="106.500" y={sy(v) + 4} textAnchor="end">{v.toLocaleString("en-US")}</AxisText>
    ))}
    <path d={`M117.500 ${y0}H1022.500`} stroke="#d9d9d9" strokeWidth="1.300" fill="none" />
    {[0, 1, 2, 3, 4, 5].map(i => <path key={i} d={`M${catX(i)} ${y0}v4`} stroke="#d9d9d9" />)}
    {YEARS.map((yr, i) => (
      <AxisText key={yr} x={catX(i) + 90.5} y="792" textAnchor="middle">{yr}</AxisText>
    ))}
    {[[REV, 9.5, "#4472c4"], [OP, 73.5, "#ed7d31"], [NET, 137.5, "#a5a5a5"]].map(([arr, off, c]) =>
      (arr as number[]).map((v, i) => (
        <rect key={`${c}${i}`} x={catX(i) + (off as number)} width="32.500" y={Math.min(sy(v), y0)} height={Math.abs(sy(v) - y0)} fill={c as string} />
      ))
    )}
    {[[WC, "#ffc000"], [CAP, "#5b9bd5"]].map(([arr, c]) => (
      <g key={c as string}>
        <polyline points={pts(arr as number[])} fill="none" stroke={c as string} strokeWidth="3" strokeLinejoin="round" />
        {(arr as number[]).map((v, i) => <circle key={i} cx={catX(i) + 90.5} cy={sy(v)} r="3.300" fill={c as string} />)}
      </g>
    ))}
    {REV.map((v, i) => <DataText key={i} x={catX(i) + 25.75} y={REV_Y[i] + 4} textAnchor="middle">{v.toLocaleString("en-US")}</DataText>)}
    {OP.map((v, i) => <DataText key={i} x={catX(i) + 89.75} y={OP_Y[i] + 4} textAnchor="middle">{v}</DataText>)}
    {NET.map((v, i) => <DataText key={i} x={catX(i) + 153.75} y={NET_Y[i] + 4} textAnchor="middle">{v}</DataText>)}
  </Plot>
);

const GroupFooter = ({ label, launch, pl = 0 }: { label: string; launch?: boolean; pl?: number }) => (
  <GroupFoot $ml={pl}>
    <GroupLabel $launch={launch}>
      {label}
      {launch && <Launcher><LaunchIcon /></Launcher>}
    </GroupLabel>
  </GroupFoot>
);

export default function App() {
  return (
    <Page>
      <Global />
      <TitleBar>
        <TitleRow>
          <Qat>
            <Slot $w={22}><Save /></Slot>
            <Slot $w={22} $ml={6}><Undo /></Slot>
            <Slot $w={10}><Caret c="#fff" /></Slot>
            <Slot $w={20} $ml={4} $dim><Redo /></Slot>
            <Slot $w={12} $dim><Caret c="#fff" /></Slot>
            <Slot $w={14} $ml={6}><QatMenu /></Slot>
          </Qat>
          <DocTitle>Swan Energy Complete Fundamental Analysis - Excel</DocTitle>
          <WinControls>
            <Slot $w={46}><RibbonDisp /></Slot>
            <Slot $w={46}><WinBtn d="M1 6.500h10" /></Slot>
            <Slot $w={46}><WinBtn d="M1.500 3.500h7v8h-7zM3.500 3V1h7v8H9" /></Slot>
            <Slot $w={46}><WinBtn d="M1 1l10 10M11 1L1 11" /></Slot>
          </WinControls>
        </TitleRow>
        <MenuRow>
          <MenuTab $w={58}>File</MenuTab>
          <MenuTab $w={60} $ml={5} $active>Home</MenuTab>
          <MenuTab $w={58}>Insert</MenuTab>
          <MenuTab $w={95}>Page Layout</MenuTab>
          <MenuTab $w={77}>Formulas</MenuTab>
          <MenuTab $w={54}>Data</MenuTab>
          <MenuTab $w={65}>Review</MenuTab>
          <MenuTab $w={55}>View</MenuTab>
          <TellMe><Bulb />Tell me what you want to do...</TellMe>
          <Share><Person />Share</Share>
        </MenuRow>
      </TitleBar>

      <Ribbon>
        <Group $w={157.5}>
          <GroupBody>
            <BigCol $w={46} $ml={2}>
              <BigIcon><Paste /></BigIcon>
              <BigLine>Paste</BigLine>
              <BigLine><Caret /></BigLine>
            </BigCol>
            <Stack $w={100} $ml={1}>
              <StackRow><IconBox><Cut /></IconBox>Cut</StackRow>
              <StackRow><IconBox><Copy /></IconBox>Copy<Slot $w={12} $ml={4}><Caret /></Slot></StackRow>
              <StackRow><IconBox><Painter /></IconBox>Format Painter</StackRow>
            </Stack>
          </GroupBody>
          <GroupFooter label="Clipboard" launch />
        </Group>

        <Group $w={207} $pl={4.5}>
          <GroupBody>
            <Rows>
              <Row>
                <Select $w={110.5}>Calibri<Caret /></Select>
                <Select $w={43.5} $joined>11<Caret /></Select>
                <Slot $w={14} $ml={7}><GrowA /></Slot>
                <Slot $w={14} $ml={8}><GrowA small /></Slot>
              </Row>
              <Row>
                <Slot $w={21}><Glyph $b>B</Glyph></Slot>
                <Slot $w={22}><Glyph $b $i>I</Glyph></Slot>
                <Slot $w={22}><Glyph $b $u>U</Glyph></Slot>
                <Slot $w={12}><Caret /></Slot>
                <Sep $ml={6} />
                <Slot $w={16} $ml={6}><Borders /></Slot>
                <Slot $w={16}><Caret /></Slot>
                <Sep $ml={3} />
                <Slot $w={16} $ml={8}><FillColor /></Slot>
                <Slot $w={14}><Caret /></Slot>
                <Slot $w={16} $ml={3}><FontColor /></Slot>
                <Slot $w={16}><Caret /></Slot>
              </Row>
            </Rows>
          </GroupBody>
          <GroupFooter label="Font" launch pl={4.5} />
        </Group>

        <Group $w={264} $pl={5}>
          <GroupBody>
            <Rows>
              <Row>
                <Slot $w={22}><Lines rows={[[0, 1, 14], [0, 4, 14], [0, 7, 14]]} /></Slot>
                <Slot $w={22}><Lines rows={[[0, 3, 14], [0, 6, 14], [0, 9, 14]]} /></Slot>
                <ActiveSlot $w={22}><Lines rows={[[0, 6, 14], [0, 9, 14], [0, 12, 14]]} /></ActiveSlot>
                <Slot $w={19} $ml={11}><Orient /></Slot>
                <Slot $w={10}><Caret /></Slot>
                <Sep $ml={16.5} />
                <Slot $w={16} $ml={7}><Wrap /></Slot>
                <TextAfterIcon>Wrap Text</TextAfterIcon>
              </Row>
              <Row>
                <Slot $w={22}><Lines rows={[[0, 1, 14], [0, 4, 10], [0, 7, 14], [0, 10, 10]]} /></Slot>
                <Slot $w={22}><Lines rows={[[0, 1, 14], [2, 4, 10], [0, 7, 14], [2, 10, 10]]} /></Slot>
                <Slot $w={22}><Lines rows={[[0, 1, 14], [4, 4, 10], [0, 7, 14], [4, 10, 10]]} /></Slot>
                <Sep $ml={3.5} />
                <Slot $w={22} $ml={3}><Indent rev /></Slot>
                <Slot $w={22}><Indent /></Slot>
                <Sep $ml={4} />
                <Slot $w={16} $ml={7}><Merge /></Slot>
                <TextAfterIcon>Merge &amp; Center</TextAfterIcon>
                <Slot $w={12} $ml={9}><Caret /></Slot>
              </Row>
            </Rows>
          </GroupBody>
          <GroupFooter label="Alignment" launch pl={5} />
        </Group>

        <Group $w={140} $pl={4.4}>
          <GroupBody>
            <Rows>
              <Row><Select $w={130.7}>General<Caret /></Select></Row>
              <Row>
                <Slot $w={16} $ml={3}><Accounting /></Slot>
                <Slot $w={16}><Caret /></Slot>
                <Slot $w={20}><Glyph $size={15}>%</Glyph></Slot>
                <Slot $w={24}><Glyph $b $size={15}>,</Glyph></Slot>
                <Sep $ml={3} />
                <Slot $w={16} $ml={8}><Decimal /></Slot>
                <Slot $w={16} $ml={5}><Decimal more /></Slot>
              </Row>
            </Rows>
          </GroupBody>
          <GroupFooter label="Number" launch pl={4.4} />
        </Group>

        <Group $w={689} $pl={9.4}>
          <GroupBody>
            <BigCol $w={63}>
              <BigIcon><CondFmt /></BigIcon>
              <BigLine>Conditional</BigLine>
              <BigLine>Formatting<Caret /></BigLine>
            </BigCol>
            <BigCol $w={63}>
              <BigIcon><FmtTable /></BigIcon>
              <BigLine>Format as</BigLine>
              <BigLine>Table<Caret /></BigLine>
            </BigCol>
            <Gallery>
              <GalleryGrid>
                <StyleCell $v="normal">Normal</StyleCell>
                <StyleCell $v="bad">Bad</StyleCell>
                <StyleCell $v="good">Good</StyleCell>
                <StyleCell $v="neutral">Neutral</StyleCell>
                <StyleCell $v="calc">Calculation</StyleCell>
                <StyleCell $v="check">Check Cell</StyleCell>
                <StyleCell $v="expl">Explanatory ...</StyleCell>
                <StyleCell $v="input">Input</StyleCell>
                <StyleCell $v="linked">Linked Cell</StyleCell>
                <StyleCell $v="note">Note</StyleCell>
              </GalleryGrid>
              <Spinner>
                <SpinBtn><Tri dir="u" /></SpinBtn>
                <SpinBtn><Tri dir="d" /></SpinBtn>
                <SpinBtn><Tri dir="d" /></SpinBtn>
              </Spinner>
            </Gallery>
          </GroupBody>
          <GroupFooter label="Styles" pl={9.4} />
        </Group>

        <Group $w={136} $pl={4.5}>
          <GroupBody>
            <BigCol $w={42}><BigIcon><InsertCells /></BigIcon><BigLine>Insert</BigLine><BigLine><Caret /></BigLine></BigCol>
            <BigCol $w={42}><BigIcon><DeleteCells /></BigIcon><BigLine>Delete</BigLine><BigLine><Caret /></BigLine></BigCol>
            <BigCol $w={42}><BigIcon><FormatCells /></BigIcon><BigLine>Format</BigLine><BigLine><Caret /></BigLine></BigCol>
          </GroupBody>
          <GroupFooter label="Cells" pl={4.5} />
        </Group>

        <Group $w={186.5} $pl={6.5}>
          <GroupBody>
            <Stack $w={89.4}>
              <StackRow><IconBox><Sigma /></IconBox>AutoSum<Slot $w={12} $ml={5}><Caret /></Slot></StackRow>
              <StackRow><IconBox><FillDown /></IconBox>Fill<Caret /></StackRow>
              <StackRow><IconBox><Eraser /></IconBox>Clear<Caret /></StackRow>
            </Stack>
            <BigCol $w={42.4}><BigIcon><SortFilter /></BigIcon><BigLine>Sort &amp;</BigLine><BigLine>Filter<Caret /></BigLine></BigCol>
            <BigCol $w={42.4}><BigIcon><Find /></BigIcon><BigLine>Find &amp;</BigLine><BigLine>Select<Caret /></BigLine></BigCol>
          </GroupBody>
          <GroupFooter label="Editing" pl={6.5} />
        </Group>

        <RibbonEnd><Chevron /></RibbonEnd>
      </Ribbon>

      <FormulaBar>
        <NameBox>K21<Caret /></NameBox>
        <Dots><VDots /></Dots>
        <FxBox>
          <Slot $w={36}><XMark /></Slot>
          <Slot $w={36}><Check /></Slot>
          <Slot $w={36}><FxText>fx</FxText></Slot>
        </FxBox>
        <FormulaInput><Chevron /></FormulaInput>
      </FormulaBar>

      <Workbook>
        <GridArea>
          <ColHeaders>
            <Corner><CornerTri /></Corner>
            {COLS.map(([c, w]) => <ColHead key={c} $w={w} $active={c === "K"}>{c}</ColHead>)}
          </ColHeaders>
          <GridBody>
            <RowHeaders>
              {ROWS.map(r => <RowHead key={r.n} $h={r.h} $active={r.n === 21}>{r.n}</RowHead>)}
            </RowHeaders>
            <Sheet>
              <Dashboard>
                <Banner>Company Financials Visualization and Analysis</Banner>
                <FinTable>
                  <HeadCell $left>Financials</HeadCell>
                  {YEARS.map(y => <HeadCell key={y}>{y}</HeadCell>)}
                  {TABLE.map((row, ri) => (
                    <React.Fragment key={row.label}>
                      <RowLabel $tight={ri === 0}>{row.label}</RowLabel>
                      {row.cells.map(([t, bg]) => <ValueCell key={t} $bg={bg} $tight={ri === 0}>{t}</ValueCell>)}
                    </React.Fragment>
                  ))}
                </FinTable>
                <ChartBox>
                  <ChartTitle>Revenue, Operating Income, Net Income and Working Capital INR Million</ChartTitle>
                  <Chart />
                  <Legend>
                    <LegendItem $w={156}><Swatch $c="#4472c4" />Revenue INR Mil</LegendItem>
                    <LegendItem $w={212}><Swatch $c="#ed7d31" />Operating Income INR Mil</LegendItem>
                    <LegendItem $w={172}><Swatch $c="#a5a5a5" />Net Income INR Mil</LegendItem>
                    <LegendItem $w={199}>
                      <svg width="27" height="8" viewBox="0 0 27 8"><path d="M0 4h27" stroke="#ffc000" strokeWidth="2.500" /><circle cx="13.500" cy="4" r="3" fill="#ffc000" /></svg>
                      Working Capital INR Mil
                    </LegendItem>
                    <LegendItem $w={170}>
                      <svg width="27" height="8" viewBox="0 0 27 8"><path d="M0 4h27" stroke="#5b9bd5" strokeWidth="2.500" /><circle cx="13.500" cy="4" r="3" fill="#5b9bd5" /></svg>
                      Cap Spending INR Mil
                    </LegendItem>
                  </Legend>
                </ChartBox>
              </Dashboard>
              <Divider />
              <Selection />
            </Sheet>
          </GridBody>
        </GridArea>
        <VScroll>
          <ScrollBtn><Tri dir="u" /></ScrollBtn>
          <VThumb />
          <Grow />
          <ScrollBtn><Tri dir="d" /></ScrollBtn>
        </VScroll>
      </Workbook>

      <TabBar>
        <TabNav><Tri dir="l" c="#b8b8b8" /><Tri dir="r" c="#217346" /></TabNav>
        <SheetTab $w={136.5}>Income Statement</SheetTab>
        <SheetTab $w={109.2}>Balance Sheet</SheetTab>
        <SheetTab $w={152.9}>Cash Flow Statement</SheetTab>
        <SheetTab $w={111.4}>Ratio Analysis</SheetTab>
        <SheetTab $w={85} $active>Financials</SheetTab>
        <SheetTab $w={97} $noSep>Profitability</SheetTab>
        <SheetTab $w={128.5}>Cash Flow Ratios</SheetTab>
        <SheetTab $w={79.1}>Liquidity</SheetTab>
        <SheetTab $w={82.4}>Efficiency</SheetTab>
        <More>...</More>
        <Slot $w={28}><PlusCircle /></Slot>
        <Slot $w={31}><VDots /></Slot>
        <HScroll>
          <ScrollBtn $w={16}><Tri dir="l" c="#666" /></ScrollBtn>
          <HThumb />
          <HRest />
          <ScrollBtn $w={15}><Tri dir="r" c="#666" /></ScrollBtn>
        </HScroll>
      </TabBar>

      <StatusBar>
        <Ready>Ready</Ready>
        <ViewBtns>
          <ViewBtn $w={38} $active><ViewNormal /></ViewBtn>
          <ViewBtn $w={38}><ViewPage /></ViewBtn>
          <ViewBtn $w={38}><ViewBreak /></ViewBtn>
          <Sign>-</Sign>
          <ZoomTrack><ZoomThumb /></ZoomTrack>
          <Sign>+</Sign>
          <ZoomText>100%</ZoomText>
        </ViewBtns>
      </StatusBar>

      <Taskbar>
        <Start><Windows /></Start>
        <Search><Magnifier />Type here to search</Search>
        <Pinned $w={48}><Cortana /></Pinned>
        <Pinned $w={48}><TaskView /></Pinned>
        <Pinned $w={49} $ml={2.5} $under><Chrome badge="A" bc="#c0391b" /></Pinned>
        <Pinned $w={49} $under><Folder /></Pinned>
        <Pinned $w={49}><Mail /></Pinned>
        <Pinned $w={49}><WaTile><FaWhatsapp size={26} color="#fff" /></WaTile></Pinned>
        <Pinned $w={49}><Snip /></Pinned>
        <Pinned $w={49}><Chrome badge="D" bc="#e8590c" /></Pinned>
        <Pinned $w={49}><Chrome badge="D" bc="#e8790c" /></Pinned>
        <Pinned $w={49}><Calc /></Pinned>
        <Pinned $w={49}><Perf /></Pinned>
        <Pinned $w={49}><Chrome face /></Pinned>
        <Pinned $w={49}><FaSpotify size={24} color="#1ed760" /></Pinned>
        <Pinned $w={49}><ZoomTile><FaVideo size={12} color="#fff" /></ZoomTile></Pinned>
        <Pinned $w={49} $on><Excel /></Pinned>
        <Tray>
          <TrayItem $w={24}><Weather /></TrayItem>
          <TrayItem $w={38} $ml={8}>31°C</TrayItem>
          <TrayItem $w={52}>Smoke</TrayItem>
          <TrayItem $w={26}><svg width="13" height="8" viewBox="0 0 13 8" fill="none" stroke="#fff" strokeWidth="1.300"><path d="M1 7l5.500-6L12 7" /></svg></TrayItem>
          <TrayItem $w={24}><Speaker /></TrayItem>
          <TrayItem $w={22}><MeetCam /></TrayItem>
          <TrayItem $w={26}><RedBadge /></TrayItem>
          <TrayItem $w={22}><Security /></TrayItem>
          <TrayItem $w={28}><Wifi /></TrayItem>
          <TrayItem $w={26}><Keyboard /></TrayItem>
          <TrayItem $w={40} $fs={12}>ENG</TrayItem>
          <Clock $w={68}><span>18:36</span><span>17-10-2021</span></Clock>
          <TrayItem $w={42}><Notify /></TrayItem>
        </Tray>
      </Taskbar>
    </Page>
  );
}
